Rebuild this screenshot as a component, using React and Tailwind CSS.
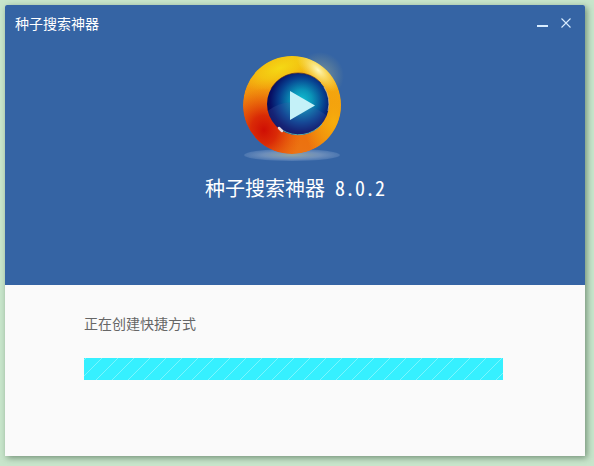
import { useId } from 'react';

const APP_NAME = '种子搜索神器';
const VERSION = '8.0.2';

const Logo = () => {
  const id = useId();
  const ref = (name) => `url(#${id}-${name})`;

  return (
    <svg className="h-[116px] w-[108px]" viewBox="3 0 108 116" aria-hidden="true">
      <defs>
        <linearGradient id={`${id}-ring`} x1="0.6" y1="0" x2="0.4" y2="1">
          <stop offset="0" stopColor="#f2b810" />
          <stop offset="0.35" stopColor="#f3a00e" />
          <stop offset="0.7" stopColor="#ec700c" />
          <stop offset="1" stopColor="#ec7414" />
        </linearGradient>
        <radialGradient id={`${id}-red`}>
          <stop offset="0" stopColor="#cf0e04" />
          <stop offset="0.35" stopColor="#d61e05" stopOpacity="0.85" />
          <stop offset="1" stopColor="#e65008" stopOpacity="0" />
        </radialGradient>
        <radialGradient id={`${id}-amber`}>
          <stop offset="0" stopColor="#f6ae0d" />
          <stop offset="0.5" stopColor="#f5a60d" stopOpacity="0.7" />
          <stop offset="1" stopColor="#f5a60d" stopOpacity="0" />
        </radialGradient>
        <radialGradient id={`${id}-yellow`}>
          <stop offset="0" stopColor="#f5d914" />
          <stop offset="0.5" stopColor="#f4cf12" stopOpacity="0.7" />
          <stop offset="1" stopColor="#f4c012" stopOpacity="0" />
        </radialGradient>
        <radialGradient id={`${id}-shine`}>
          <stop offset="0" stopColor="#fdf7bc" />
          <stop offset="0.4" stopColor="#fbea80" stopOpacity="0.7" />
          <stop offset="1" stopColor="#f8e060" stopOpacity="0" />
        </radialGradient>
        <radialGradient id={`${id}-lens`} cx="0.56" cy="0.44" r="0.56">
          <stop offset="0" stopColor="#10bfd2" />
          <stop offset="0.3" stopColor="#0a94b8" />
          <stop offset="0.65" stopColor="#07408f" />
          <stop offset="0.9" stopColor="#070f64" />
          <stop offset="1" stopColor="#06085a" />
        </radialGradient>
        <radialGradient id={`${id}-shadow`}>
          <stop offset="0" stopColor="#93a59f" />
          <stop offset="0.6" stopColor="#7896be" stopOpacity="0.85" />
          <stop offset="1" stopColor="#6f92c2" stopOpacity="0.4" />
        </radialGradient>
        <clipPath id={`${id}-disc`}>
          <circle cx="54" cy="55" r="49" />
        </clipPath>
        <clipPath id={`${id}-glass`}>
          <circle cx="60" cy="54" r="31" />
        </clipPath>
      </defs>

      <ellipse cx="54" cy="105" rx="48" ry="6" fill={ref('shadow')} />
      <circle cx="82" cy="26" r="24" fill={ref('shine')} opacity="0.3" />

      <g clipPath={ref('disc')}>
        <circle cx="54" cy="55" r="49" fill={ref('ring')} />
        <ellipse cx="96" cy="72" rx="30" ry="42" fill={ref('amber')} />
        <ellipse cx="26" cy="80" rx="38" ry="42" fill={ref('red')} />
        <ellipse cx="42" cy="18" rx="42" ry="18" transform="rotate(-20 42 18)" fill={ref('yellow')} />
        <ellipse cx="80" cy="20" rx="28" ry="13" transform="rotate(45 80 20)" fill={ref('shine')} />
      </g>

      <circle cx="60" cy="54" r="31" fill={ref('lens')} />
      <path
        d="M28 62 Q56 40 92 68 V90 H28 Z"
        fill="#3c5aa4"
        fillOpacity="0.28"
        clipPath={ref('glass')}
      />
      <path d="M44 80 A31 31 0 0 0 84 74" fill="none" stroke="#58a8a8" strokeWidth="1" />
      <path d="M86 37 A31 31 0 0 1 90 61" fill="none" stroke="#d8c8a0" strokeOpacity="0.7" strokeWidth="1" />
      <path d="M33 39 A31 31 0 0 1 83 33" fill="none" stroke="#5c2a20" strokeOpacity="0.6" strokeWidth="1" />
      <path d="M41 78 L44 81" stroke="#e8dce0" strokeWidth="2.5" strokeLinecap="round" />
      <path d="M52 41 L77 55.5 L52 70 Z" fill="#c4f1f8" />
    </svg>
  );
};

const TitleBar = () => (
  <div className="flex items-start justify-between pt-[7px] pr-[11px] pl-[10px]">
    <h1 className="text-sm leading-[22px]">{APP_NAME}</h1>
    <div className="flex gap-1 pt-[3px]">
      <button type="button" aria-label="最小化" className="flex h-4 w-6 items-center justify-center">
        <svg className="h-3 w-3" viewBox="0 0 12 12" aria-hidden="true">
          <path d="M1 9H12" stroke="#d8ecff" strokeWidth="2" />
        </svg>
      </button>
      <button type="button" aria-label="关闭" className="flex h-4 w-4 items-center justify-center">
        <svg className="h-3 w-3" viewBox="0 0 12 12" aria-hidden="true">
          <path d="M1.5 1.5L10.5 10.5M10.5 1.5L1.5 10.5" stroke="#d8ecff" strokeWidth="1.1" />
        </svg>
      </button>
    </div>
  </div>
);

const ProgressBar = () => (
  <div
    role="progressbar"
    aria-labelledby="install-status"
    className="h-[22px] bg-[#36f0ff]"
  >
    <svg className="h-full w-full" aria-hidden="true">
      <defs>
        <pattern id="stripes" width="16" height="22" patternUnits="userSpaceOnUse">
          <path
            d="M-20 22L2 0M-4 22L18 0M12 22L34 0"
            stroke="#8af7ff"
            strokeOpacity="0.8"
            strokeWidth="1"
          />
        </pattern>
      </defs>
      <rect width="100%" height="100%" fill="url(#stripes)" />
    </svg>
  </div>
);

const App = () => {
  return (
    <div className="flex min-h-screen bg-[#c8e5cb] pt-[5px] pr-[9px] pb-[10px] pl-[5px] font-['Noto_Sans_CJK_SC',sans-serif]">
      <main className="flex flex-1 flex-col rounded-t-xs bg-[#fafafa] shadow-[2px_2px_6px_0px_rgba(60,90,65,0.6)]">
        <header className="rounded-t-xs bg-[#3564a4] pb-[83px] text-white">
          <TitleBar />
          <div className="flex flex-col items-center pt-4">
            <Logo />
            <p className="mt-2 text-xl leading-7 whitespace-pre [font-feature-settings:'hwid']">
              {APP_NAME} {VERSION}
            </p>
          </div>
        </header>

        <section className="flex flex-col gap-[25px] pt-7 pr-[82px] pl-[79px]">
          <p id="install-status" className="text-sm leading-5 text-[#666]">正在创建快捷方式</p>
          <ProgressBar />
        </section>
      </main>
    </div>
  );
};

export default App;
